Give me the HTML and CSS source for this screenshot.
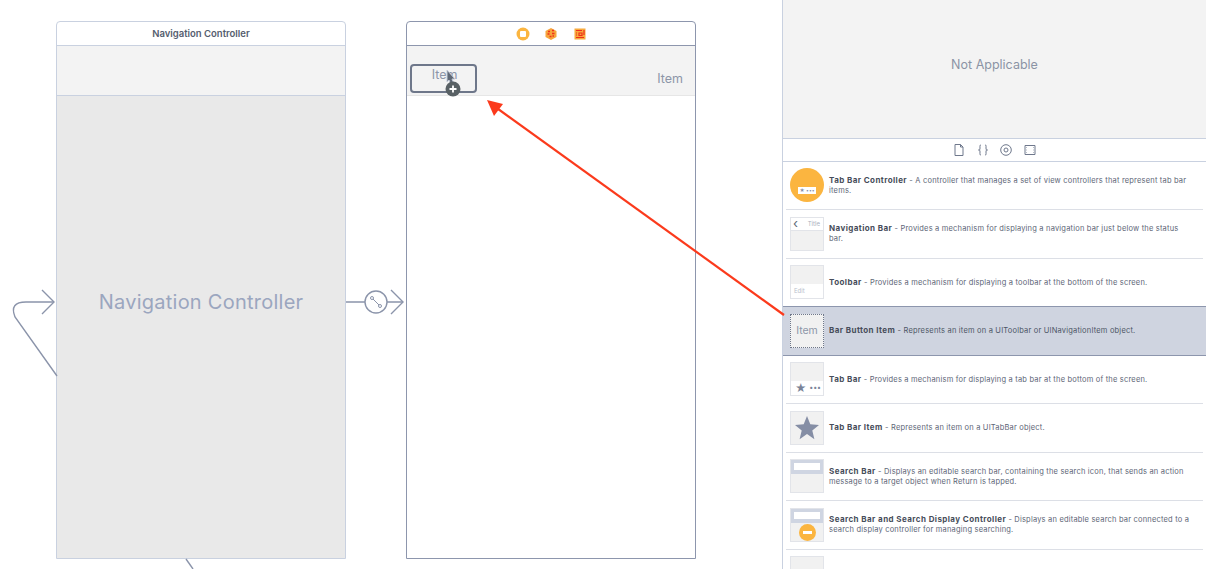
FILE: index.html
```html
<!DOCTYPE html>
<html lang="en">
<head>
    <meta charset="UTF-8">
    <meta name="viewport" content="width=device-width, initial-scale=1.0">
    <title>Storyboard</title>
    <link rel="stylesheet" href="styles.css">
</head>
<body>
    <div class="page">
        <div class="canvas">
            <div class="scene scene-nav">
                <div class="scene-head">Navigation Controller</div>
                <div class="scene-bar"></div>
                <div class="scene-body">Navigation Controller</div>
            </div>

            <div class="scene scene-root">
                <div class="scene-head">
                    <svg width="14" height="14" viewBox="0 0 14 14"><circle cx="7" cy="7" r="6.500" fill="#fbb540"/><rect x="4" y="4" width="6" height="6" rx="1" fill="#fff"/></svg>
                    <svg width="14" height="14" viewBox="0 0 14 14"><path d="M7 1l5.500 3v6L7 13l-5.500-3V4z" fill="#f6a53c"/><path d="M4 4.500h2M8 3.500h2M3.500 7h2M8 6.500h2.500M5.500 9.500h2M8.500 9h1.500" stroke="#f0311c" stroke-width="1.300"/></svg>
                    <svg width="14" height="14" viewBox="0 0 14 14"><rect x="1.500" y="1.500" width="11" height="11" fill="#f8a93c"/><path d="M3 3.500h6M3 6h1M3 8h1M3 10.500h8M11 3v5M6 6h3v2.500H6z" stroke="#ee2f1c" stroke-width="1.200" fill="none"/></svg>
                </div>
                <div class="scene-bar scene-bar-items">
                    <span class="bar-item bar-item-drop">Item</span>
                    <span class="bar-item bar-item-right">Item</span>
                </div>
            </div>

            <svg class="lines" width="782" height="569" viewBox="0 0 782 569">
                <g fill="none" stroke="#8b94aa" stroke-width="1.400">
                    <path d="M57 376L15 317Q9 302 26 302H54"/>
                    <path d="M42 290L54 302L42 314"/>
                    <path d="M186 559L193 569"/>
                    <path d="M346 302H365M387 302H403"/>
                    <circle cx="376" cy="302" r="11"/>
                    <path d="M391 290L403 302L391 314"/>
                    <path d="M373 299L379 305" stroke-width="1"/>
                    <circle cx="372" cy="298" r="1.500" stroke-width="1"/>
                    <circle cx="380" cy="306" r="1.500" stroke-width="1"/>
                </g>
            </svg>

            <!-- drag cursor over the dropped item -->
            <svg class="cursor" width="24" height="30" viewBox="0 0 24 30">
                <path d="M5 0l8 9h-3l2 5-3 1-2-5-2 2z" fill="#5f6875" stroke="#c3cad8"/>
                <circle cx="11" cy="19" r="7.500" fill="#596165"/>
                <path d="M7.500 19h7M11 15.500v7" stroke="#fff" stroke-width="1.800"/>
            </svg>
        </div>

        <div class="panel">
            <div class="panel-empty">Not Applicable</div>
            <div class="panel-tabs">
                <svg width="12" height="12" viewBox="0 0 12 12"><path d="M2 .5h5.500L10 3v8.500H2zM7.500.5V3H10" fill="none" stroke="#6f788c"/></svg>
                <svg width="12" height="12" viewBox="0 0 12 12"><path d="M4 1C2.500 1 3 2 3 4S2.500 6 1.500 6C2.500 6 3 6 3 8s-.5 3 1 3M8 1c1.500 0 1 1 1 3s.5 2 1.500 2C9.500 6 9 6 9 8s.5 3-1 3" fill="none" stroke="#6f788c"/></svg>
                <svg width="12" height="12" viewBox="0 0 12 12"><circle cx="6" cy="6" r="5.300" fill="none" stroke="#6f788c"/><circle cx="6" cy="6" r="2" fill="none" stroke="#6f788c"/></svg>
                <svg width="12" height="12" viewBox="0 0 12 12"><path d="M1 1.500h10v9H1zM2.500 3.500h.5M2.500 6h.5M2.500 8.500h.5M9 3.500h.5M9 6h.5M9 8.500h.5" fill="none" stroke="#6f788c"/></svg>
            </div>
            <ul class="library">
                <li class="row">
                    <div class="thumb-circle"><span class="mini-tabbar">★ •••</span></div>
                    <p><b>Tab Bar Controller</b> - A controller that manages a set of view controllers that represent tab bar items.</p>
                </li>
                <li class="row">
                    <div class="thumb thumb-navbar"><div class="thumb-top"><i>‹</i><span>Title</span></div></div>
                    <p><b>Navigation Bar</b> - Provides a mechanism for displaying a navigation bar just below the status bar.</p>
                </li>
                <li class="row">
                    <div class="thumb thumb-toolbar"><div class="thumb-low">Edit</div></div>
                    <p><b>Toolbar</b> - Provides a mechanism for displaying a toolbar at the bottom of the screen.</p>
                </li>
                <li class="row row-selected">
                    <div class="thumb thumb-item">Item</div>
                    <p><b>Bar Button Item</b> - Represents an item on a UIToolbar or UINavigationItem object.</p>
                </li>
                <li class="row">
                    <div class="thumb thumb-toolbar"><div class="thumb-low thumb-low-tabs"><span class="star">★</span><span>•••</span></div></div>
                    <p><b>Tab Bar</b> - Provides a mechanism for displaying a tab bar at the bottom of the screen.</p>
                </li>
                <li class="row">
                    <div class="thumb thumb-star">
                        <svg width="26" height="26" viewBox="0 0 26 26"><path d="M13 1l3.300 8.300 8.700.6-6.700 5.700 2.100 8.700L13 19l-7.400 5.300 2.100-8.700L1 9.900l8.700-.6z" fill="#858ea5"/></svg>
                    </div>
                    <p><b>Tab Bar Item</b> - Represents an item on a UITabBar object.</p>
                </li>
                <li class="row">
                    <div class="thumb"><div class="thumb-search"><span></span></div></div>
                    <p><b>Search Bar</b> - Displays an editable search bar, containing the search icon, that sends an action message to a target object when Return is tapped.</p>
                </li>
                <li class="row">
                    <div class="thumb thumb-display"><div class="thumb-search"><span></span></div><div class="thumb-minus"><span></span></div></div>
                    <p><b>Search Bar and Search Display Controller</b> - Displays an editable search bar connected to a search display controller for managing searching.</p>
                </li>
                <li class="row">
                    <div class="thumb"></div>
                </li>
            </ul>
        </div>

        <svg class="drag-arrow" width="310" height="230" viewBox="0 0 310 230">
            <path d="M306 222L16 13" stroke="#fb3a1c" stroke-width="2.200" fill="none"/>
            <path d="M9 7L25 11L16 23z" fill="#fb3a1c"/>
        </svg>
    </div>
</body>
</html>
```

FILE: styles.css
```css
* {
    box-sizing: border-box;
}
html, body {
    margin: 0;
    height: 100%;
    overflow: hidden;
}
body {
    font-family: Inter, "Liberation Sans", sans-serif;
    background-color: #fff;
    color: #4c5465;
}
.page {
    position: relative;
    display: flex;
    width: 1206px;
    height: 569px;
    overflow: hidden;
}

/* storyboard canvas */
.canvas {
    position: relative;
    width: 782px;
    height: 569px;
}
.scene {
    position: absolute;
    top: 21px;
    width: 290px;
    height: 538px;
    display: flex;
    flex-direction: column;
    border: 1px solid #c9d1e0;
    border-radius: 4px 4px 0 0;
    background-color: #fff;
}
.scene-nav {
    left: 56px;
}
.scene-root {
    left: 406px;
    border-color: #8d96ad;
}
.scene-head {
    height: 24px;
    display: flex;
    align-items: center;
    justify-content: center;
    flex-shrink: 0;
    gap: 14.500px;
    font-size: 9.500px;
    font-weight: 600;
    color: #555d6e;
    border-bottom: 1px solid #c9d1e0;
}
.scene-root .scene-head {
    border-bottom-color: #8d96ad;
}
.scene-bar {
    height: 50px;
    flex-shrink: 0;
    background-color: #f3f3f3;
    background-image: radial-gradient(#fbfbfb 0.6px, transparent 0.7px);
    background-size: 2px 2px;
    border-bottom: 1px solid #c9d1e0;
}
.scene-root .scene-bar {
    border-bottom-color: #e6e6e6;
}
.scene-bar-items {
    display: flex;
    justify-content: space-between;
    padding: 18px 12px 0 3px;
}
.bar-item {
    font-size: 12.500px;
    line-height: 20px;
    color: #8d96a8;
}
.bar-item-drop {
    width: 67px;
    height: 29px;
    padding-left: 2px;
    text-align: center;
    line-height: 18px;
    border: 2px solid #6e778a;
    border-radius: 4px;
}
.bar-item-right {
    margin-top: 5px;
}
.scene-body {
    flex: 1;
    padding-bottom: 50px;
    display: flex;
    align-items: center;
    justify-content: center;
    font-size: 20px;
    letter-spacing: 0.25px;
    color: #9ba6bf;
    background-color: #e9e9e9;
}
.lines {
    position: absolute;
    top: 0;
    left: 0;
}
.cursor {
    position: absolute;
    left: 442px;
    top: 70px;
}

/* right hand library panel */
.panel {
    width: 424px;
    height: 569px;
    display: flex;
    flex-direction: column;
    border-left: 1px solid #c9d1e0;
}
.panel-empty {
    height: 139px;
    flex-shrink: 0;
    padding-bottom: 10px;
    display: flex;
    align-items: center;
    justify-content: center;
    font-size: 12.500px;
    color: #8b93a5;
    background-color: #f3f3f3;
    background-image: radial-gradient(#fbfbfb 0.6px, transparent 0.7px);
    background-size: 2px 2px;
    border-bottom: 1px solid #c9d1e0;
}
.panel-tabs {
    height: 23px;
    flex-shrink: 0;
    display: flex;
    align-items: center;
    justify-content: center;
    gap: 11.500px;
    border-bottom: 1px solid #c9d1e0;
}
.library {
    list-style: none;
    margin: -0.5px 0 0;
    padding: 0;
}
.row {
    height: 48.500px;
    margin: 0 3px;
    padding: 0 13px 0 4px;
    display: flex;
    align-items: center;
    gap: 5px;
    border-bottom: 1px solid #dcdfe6;
}
.row p {
    margin: 0;
    font-size: 7.500px;
    line-height: 10px;
    letter-spacing: 0.19px;
    color: #5d6576;
}
.row b {
    font-size: 8px;
    font-weight: 700;
    letter-spacing: 0.42px;
    color: #474d5a;
}
.row-selected {
    margin: -1px 0 0;
    padding: 0 16px 0 7px;
    height: 49.500px;
    background-color: #cfd4e0;
    background-image: radial-gradient(#e6e9ef 0.6px, transparent 0.7px);
    background-size: 2px 2px;
    border-top: 1px solid #8d96ad;
    border-bottom: 1px solid #8d96ad;
}
.row-selected p {
    color: #4c5465;
}

/* thumbnails */
.thumb {
    position: relative;
    width: 34px;
    height: 34px;
    flex-shrink: 0;
    overflow: hidden;
    background-color: #f1f1f1;
    border: 1px solid #e2e4e9;
}
.thumb-circle {
    position: relative;
    width: 34px;
    height: 34px;
    flex-shrink: 0;
    border-radius: 50%;
    background-color: #fbb540;
}
.mini-tabbar {
    position: absolute;
    left: 8px;
    top: 19px;
    width: 18px;
    height: 7px;
    font-size: 5px;
    line-height: 7px;
    text-align: center;
    color: #858ea5;
    background-color: #fff;
}
.thumb-top {
    height: 13px;
    display: flex;
    justify-content: space-between;
    align-items: center;
    padding: 0 3px 0 2px;
    font-size: 6px;
    color: #a9afbd;
    background-color: #fff;
    border-bottom: 1px solid #e2e4e9;
}
.thumb-top i {
    font-style: normal;
    font-size: 13px;
    line-height: 13px;
    color: #5f6779;
}
.thumb-low {
    position: absolute;
    left: 0;
    right: 0;
    bottom: 0;
    height: 14px;
    padding-left: 3px;
    font-size: 6px;
    line-height: 14px;
    color: #b9bfcc;
    background-color: #fff;
}
.thumb-low-tabs {
    display: flex;
    justify-content: space-between;
    padding: 0 2px 0 4px;
    font-size: 7px;
    color: #7a8398;
}
.star {
    font-size: 11px;
}
.thumb-item {
    display: flex;
    align-items: center;
    justify-content: center;
    font-size: 10.500px;
    color: #8d96a8;
    background-color: #f1f1f1;
    border: 1px dotted #6e778a;
}
.thumb-star {
    display: flex;
    align-items: center;
    justify-content: center;
}
.thumb-search {
    height: 14px;
    padding: 3px;
    background-color: #cfd5e2;
}
.thumb-search span {
    display: block;
    height: 7px;
    background-color: #fff;
}
.thumb-minus {
    position: absolute;
    left: 8px;
    top: 15px;
    width: 17px;
    height: 17px;
    display: flex;
    align-items: center;
    justify-content: center;
    border-radius: 50%;
    background-color: #fbb540;
}
.thumb-minus span {
    width: 9px;
    height: 3px;
    background-color: #fff;
}

.drag-arrow {
    position: absolute;
    left: 478px;
    top: 93px;
}
```
